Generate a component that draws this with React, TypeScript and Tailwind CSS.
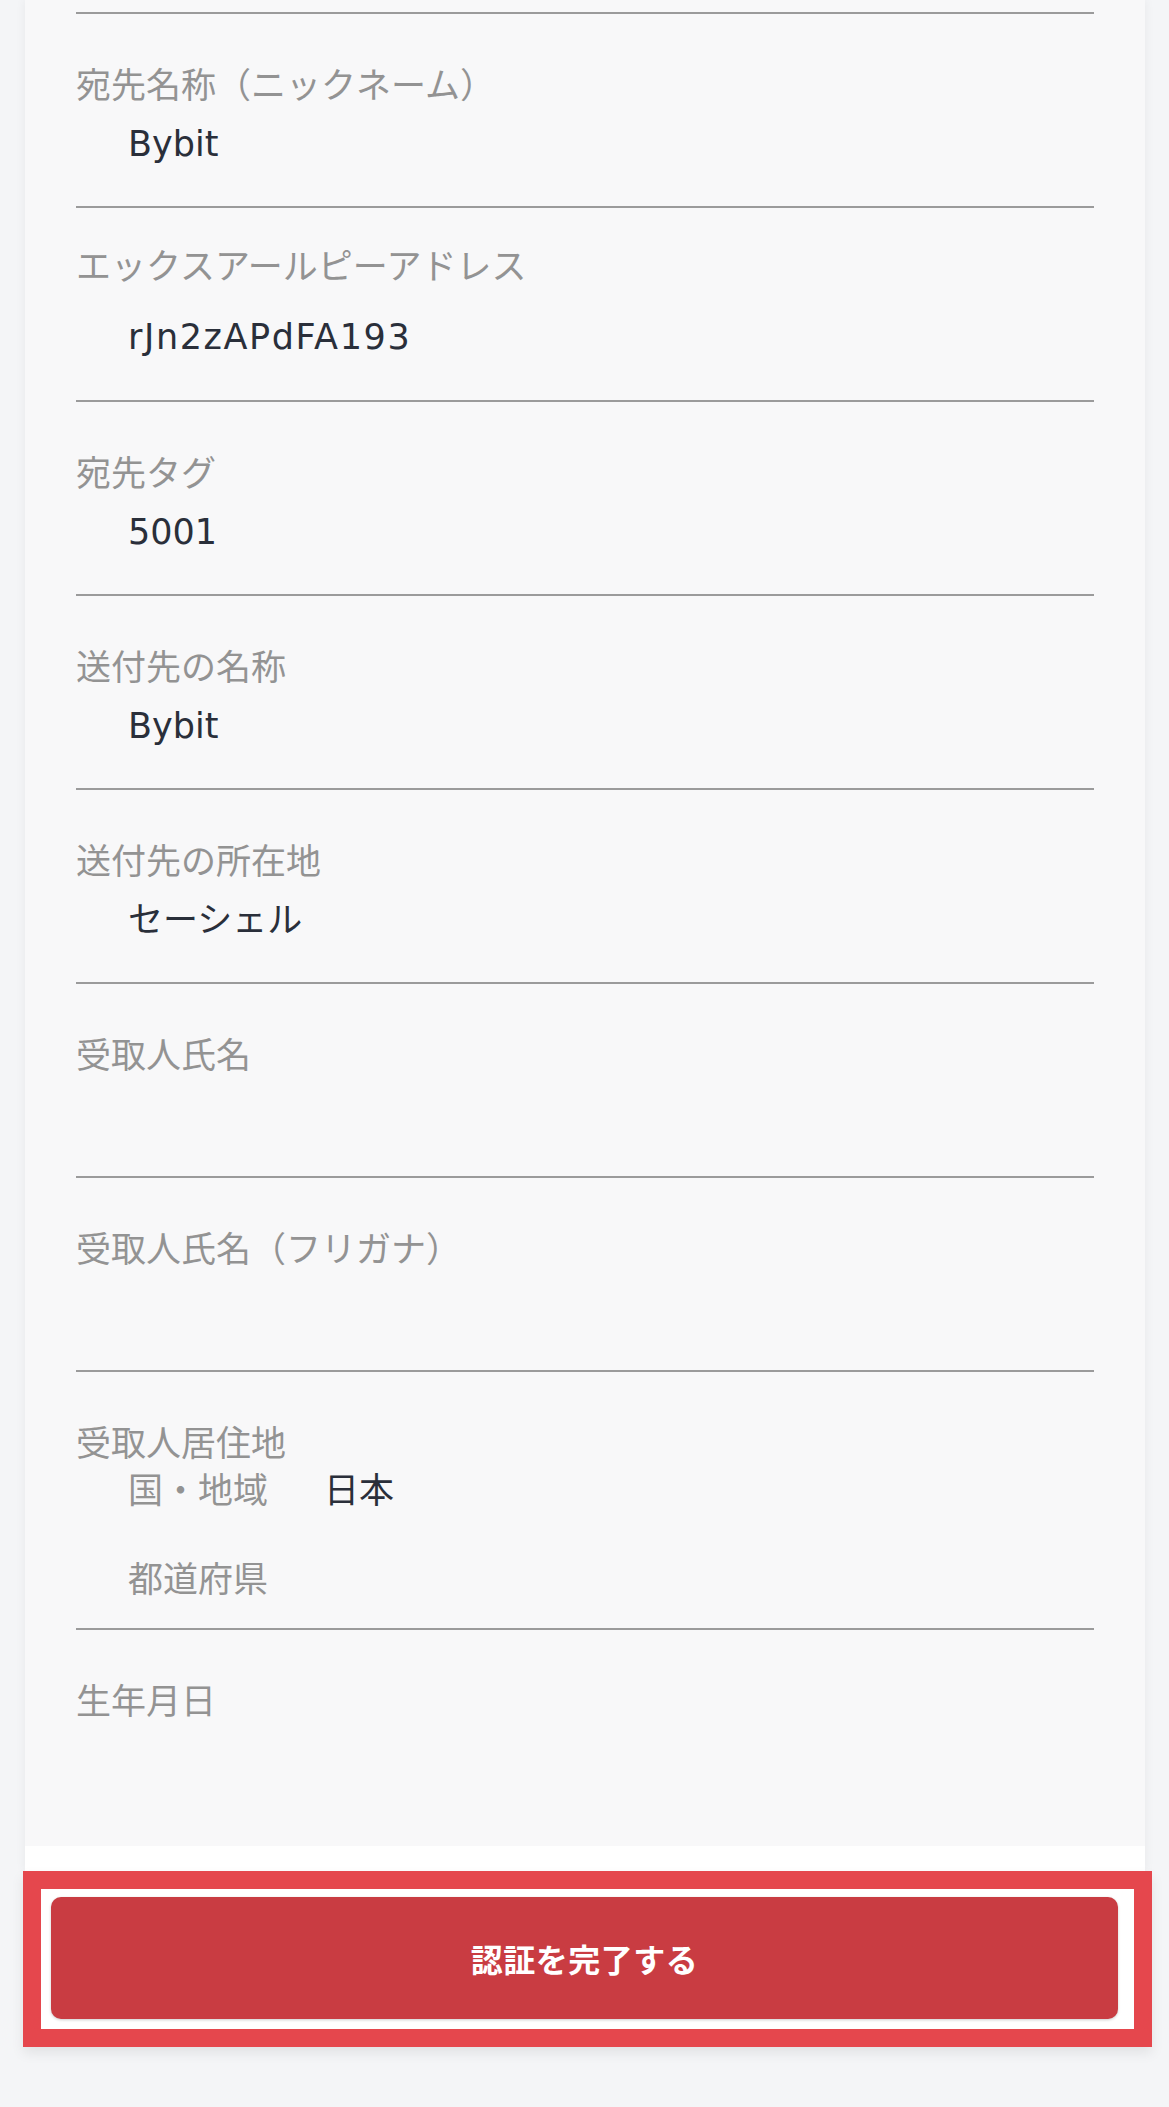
import React from 'react'

const FONT = '"Noto Sans CJK JP", "Noto Sans", sans-serif'
const VALUE_FONT = '"DejaVu Sans", "Noto Sans CJK JP", sans-serif'

type Field = { label: string; value?: string; tight?: boolean }

const FIELDS: Field[] = [
  { label: '宛先名称（ニックネーム）', value: 'Bybit' },
  { label: 'エックスアールピーアドレス', value: 'rJn2zAPdFA193', tight: true },
  { label: '宛先タグ', value: '5001' },
  { label: '送付先の名称', value: 'Bybit' },
  { label: '送付先の所在地', value: 'セーシェル' },
  { label: '受取人氏名' },
  { label: '受取人氏名（フリガナ）' },
]

function Row({ field }: { field: Field }) {
  return (
    <div
      className={`h-[194px] border-b-2 border-[#9b9b9b] ${field.tight ? 'pt-[36px]' : 'pt-[49px]'}`}
    >
      <div className="text-[35px] leading-[40px] text-[#939393]">{field.label}</div>
      {field.value && (
        <div
          className={`pl-[52px] text-[35px] leading-[44px] text-[#2a2f3a] ${field.tight ? 'mt-[31px] tracking-[1.6px]' : 'mt-[19px]'}`}
          style={{ fontFamily: VALUE_FONT }}
        >
          {field.value}
        </div>
      )}
    </div>
  )
}

export default function App() {
  return (
    <div className="min-h-[2107px] w-full bg-[#f4f5f7]" style={{ fontFamily: FONT }}>
      <div className="ml-[25px] w-[1120px] bg-white shadow-[0_0_10px_rgba(0,0,0,0.06)]">
        {/* Form body */}
        <div className="bg-[#f8f8f9] px-[51px]">
          <div className="h-[14px] border-b-2 border-[#9b9b9b]" />

          {FIELDS.map((f) => (
            <Row key={f.label} field={f} />
          ))}

          {/* 受取人居住地 */}
          <div className="h-[258px] border-b-2 border-[#9b9b9b] pt-[49px]">
            <div className="text-[35px] leading-[40px] text-[#939393]">受取人居住地</div>
            <div className="mt-[5px] flex pl-[52px] text-[35px] leading-[44px]">
              <span className="w-[196px] text-[#939393]">国・地域</span>
              <span className="text-[#2a2f3a]">日本</span>
            </div>
            <div className="mt-[45px] pl-[52px] text-[35px] leading-[44px] text-[#939393]">
              都道府県
            </div>
          </div>

          {/* 生年月日 */}
          <div className="h-[216px] pt-[49px]">
            <div className="text-[35px] leading-[40px] text-[#939393]">生年月日</div>
          </div>
        </div>
        <div className="h-[25px] bg-white" />
      </div>

      {/* Submit button (highlighted) */}
      <div className="ml-[23px] w-[1129px] border-[18px] border-[#e5474d] bg-white pt-[8px] pr-[16px] pb-[10px] pl-[10px] shadow-[0_6px_12px_rgba(0,0,0,0.08)]">
        <button className="flex h-[122px] w-full items-center justify-center rounded-[10px] bg-[#c93c42] text-[32px] font-bold tracking-[0.5px] text-white shadow-[0_1px_3px_rgba(0,0,0,0.2)]">
          認証を完了する
        </button>
      </div>
    </div>
  )
}
